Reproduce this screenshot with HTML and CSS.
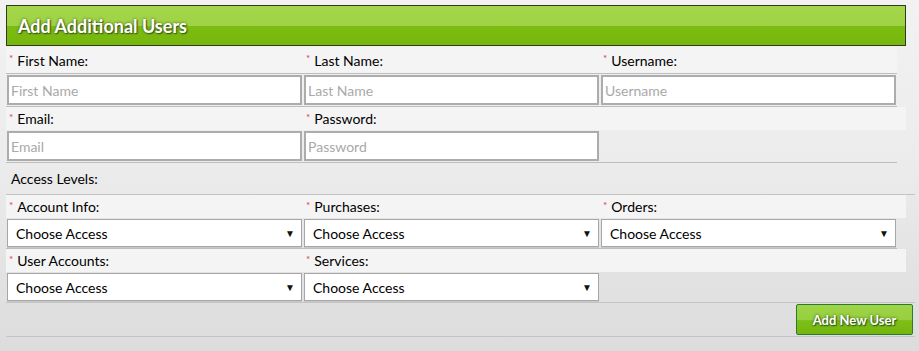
FILE: index.html
```html
<!DOCTYPE html>
<html>
<head>
<meta charset="utf-8">
<link rel="stylesheet" href="styles.css">
</head>
<body>
<div class="panel">
  <div class="header"><h2 class="title">Add Additional Users</h2></div>

  <div class="labels first">
    <label class="lbl"><span class="req">*</span>First Name:</label>
    <label class="lbl"><span class="req">*</span>Last Name:</label>
    <label class="lbl"><span class="req">*</span>Username:</label>
  </div>
  <div class="fields line3">
    <input class="inp" type="text" placeholder="First Name">
    <input class="inp" type="text" placeholder="Last Name">
    <input class="inp" type="text" placeholder="Username">
  </div>

  <div class="labels">
    <label class="lbl"><span class="req">*</span>Email:</label>
    <label class="lbl"><span class="req">*</span>Password:</label>
    <span class="lbl"></span>
  </div>
  <div class="fields line-full">
    <input class="inp" type="text" placeholder="Email">
    <input class="inp" type="password" placeholder="Password">
  </div>

  <div class="section">Access Levels:</div>

  <div class="labels">
    <label class="lbl"><span class="req">*</span>Account Info:</label>
    <label class="lbl"><span class="req">*</span>Purchases:</label>
    <label class="lbl"><span class="req">*</span>Orders:</label>
  </div>
  <div class="fields sel-row line3">
    <div class="sel"><select><option>Choose Access</option></select></div>
    <div class="sel"><select><option>Choose Access</option></select></div>
    <div class="sel"><select><option>Choose Access</option></select></div>
  </div>

  <div class="labels">
    <label class="lbl"><span class="req">*</span>User Accounts:</label>
    <label class="lbl"><span class="req">*</span>Services:</label>
    <span class="lbl"></span>
  </div>
  <div class="fields sel-row line-wide">
    <div class="sel"><select><option>Choose Access</option></select></div>
    <div class="sel"><select><option>Choose Access</option></select></div>
  </div>

  <div class="actions">
    <button class="btn" type="button">Add New User</button>
  </div>
</div>
</body>
</html>
```

FILE: styles.css
```css
html, body {
  margin: 0;
  padding: 0;
}
body {
  width: 919px;
  height: 351px;
  background: linear-gradient(#f2f2f2 0%, #ececec 45%, #dcdcdc 100%);
  font-family: Lato, "Liberation Sans", sans-serif;
  color: #000;
  overflow: hidden;
}
.panel {
  padding: 5px 0 0 6px;
  width: 909px;
}
.header {
  width: 898px;
  height: 39px;
  border: 1px solid #2f3a22;
  background: linear-gradient(#a3d64b 0%, #9fd344 50%, #7cbd12 52%, #77b70d 100%);
  display: flex;
  align-items: center;
}
.title {
  margin: 0 0 0 11px;
  font-size: 18px;
  font-weight: bold;
  color: #fff;
  text-shadow: 0 0 3px #3d5a10, 1px 1px 1px #3d5a10;
}
.labels {
  display: grid;
  grid-template-columns: 297px 297px 297px;
  background: #f4f4f4;
  height: 23px;
  width: 900px;
}
.labels.first {
  margin-top: 1px;
  height: 26px;
  width: 891px;
  border-bottom: 1px solid #bdbdbd;
}
.lbl {
  display: flex;
  align-items: center;
  font-size: 14px;
  padding-left: 3px;
}
.req {
  color: #e0393e;
  font-size: 10px;
  margin-right: 4px;
  position: relative;
  top: -2px;
}
.fields {
  display: grid;
  grid-template-columns: 297px 297px 297px;
  padding: 1px 0;
  width: 891px;
}
.fields.line3 {
  border-bottom: 1px solid #bdbdbd;
}
.fields.line-full {
  border-bottom: 1px solid #bdbdbd;
}
.fields.line-wide {
  width: 909px;
  border-bottom: 1px solid #c4c4c4;
  padding-bottom: 1px;
}
.inp {
  box-sizing: border-box;
  width: 295px;
  height: 30px;
  margin: 0 1px;
  border: 2px solid #acacac;
  background: #fff;
  padding: 0 2px;
  font-family: Lato, "Liberation Sans", sans-serif;
  font-size: 14px;
  color: #111;
  outline: none;
}
.inp::placeholder {
  color: #a9a9a9;
}
.sel-row {
  padding: 1px 0 1px;
}
.sel {
  position: relative;
  width: 295px;
  margin: 0 1px;
}
.sel select {
  box-sizing: border-box;
  width: 295px;
  height: 28px;
  border: 1px solid #a6a6a6;
  border-radius: 0;
  background: #fff;
  appearance: none;
  -webkit-appearance: none;
  padding: 0 8px;
  font-family: Lato, "Liberation Sans", sans-serif;
  font-size: 14px;
  color: #000;
  box-shadow: 0 1px 0 #c8c8c8;
}
.sel::after {
  content: "\25BC";
  position: absolute;
  right: 7px;
  top: 8px;
  font-size: 10px;
  color: #111;
  pointer-events: none;
}
.section {
  height: 31px;
  display: flex;
  align-items: center;
  padding-left: 5px;
  font-size: 14px;
  width: 904px;
  border-bottom: 1px solid #c4c4c4;
}
.actions {
  width: 909px;
  height: 33px;
  display: flex;
  justify-content: flex-end;
  align-items: center;
  border-bottom: 1px solid #c4c4c4;
}
.btn {
  width: 117px;
  height: 31px;
  margin-right: 2px;
  border: 1px solid #2b7a2e;
  border-radius: 2px;
  background: linear-gradient(#9fd548 0%, #97cf3e 50%, #7ebf18 54%, #74b60e 100%);
  color: #fff;
  font-family: Lato, "Liberation Sans", sans-serif;
  font-weight: bold;
  font-size: 13px;
  text-shadow: 0 0 3px #2f5a0e, 1px 1px 1px #2f5a0e;
  padding: 0;
}
```
